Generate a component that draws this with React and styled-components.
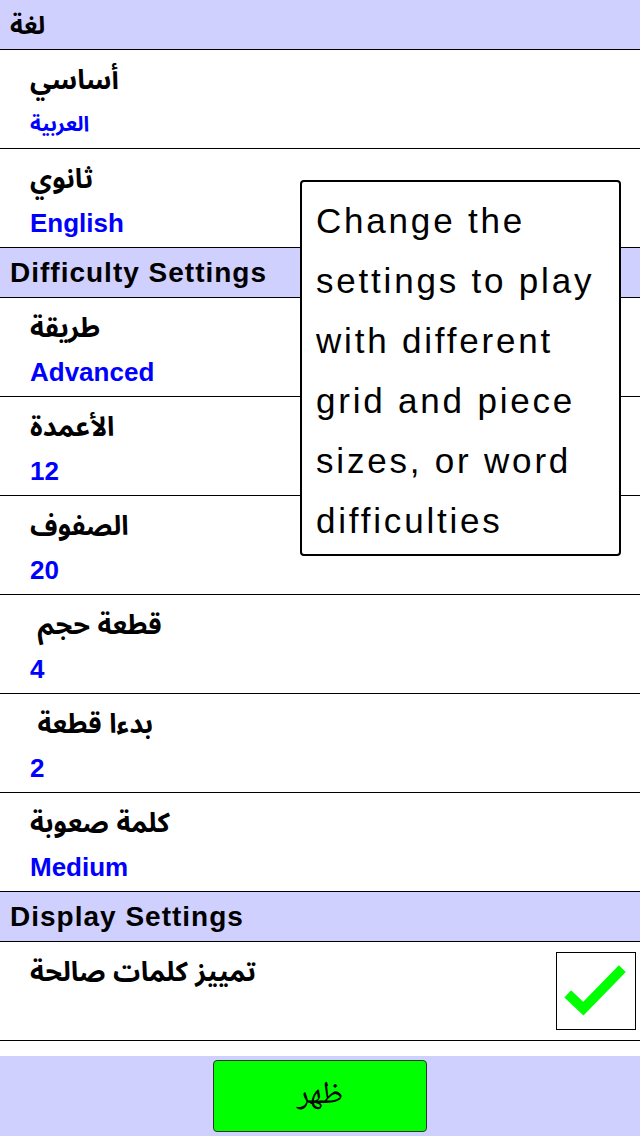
import React from "react";
import styled, { createGlobalStyle } from "styled-components";

const Global = createGlobalStyle`
  html, body { margin: 0; padding: 0; background: #fff; }
  body { font-family: "Liberation Sans", "Noto Sans Arabic", "Noto Naskh Arabic", "DejaVu Sans", sans-serif; }
  * { box-sizing: border-box; }
`;

const Screen = styled.div`
  position: relative;
  width: 640px;
  height: 1136px;
  display: flex;
  flex-direction: column;
  overflow: hidden;
  background: #fff;
`;

const List = styled.div`
  flex: 1;
  overflow: hidden;
  display: flex;
  flex-direction: column;
`;

const SectionHeader = styled.div`
  flex: none;
  height: 50px;
  padding: 5px 0 0 10px;
  background: #d0d0ff;
  border-bottom: 1px solid #000;
  font-size: ${(p) => (p.$arabic ? "25px" : "28px")};
  line-height: 40px;
  font-weight: bold;
  letter-spacing: ${(p) => (p.$arabic ? "0" : "1px")};
  color: #000;
`;

const Row = styled.div`
  flex: none;
  height: 99px;
  display: flex;
  align-items: flex-start;
  justify-content: space-between;
  padding: 6px 4px 0 30px;
  border-bottom: 1px solid #000;
`;

const RowText = styled.div`
  display: flex;
  flex-direction: column;
`;

const Title = styled.div`
  font-size: 27px;
  line-height: 48px;
  font-weight: bold;
  color: #000;
  white-space: pre;
`;

const Value = styled.div`
  font-size: ${(p) => (p.$arabic ? "21px" : "26px")};
  line-height: 40px;
  font-weight: bold;
  color: #0000ff;
`;

const Check = styled.div`
  width: 80px;
  height: 78px;
  margin-top: 4px;
  border: 1px solid #000;
  background: #fff;
  display: flex;
  align-items: center;
  justify-content: center;
`;

const BottomBar = styled.div`
  flex: none;
  height: 80px;
  background: #d0d0ff;
  display: flex;
  justify-content: center;
  align-items: flex-start;
  padding-top: 4px;
`;

const ShowButton = styled.button`
  width: 214px;
  height: 72px;
  background: #00ff00;
  border: 1px solid #333;
  border-radius: 4px;
  font-family: "Liberation Sans", "Noto Naskh Arabic", "Noto Sans Arabic", "DejaVu Sans", sans-serif;
  font-size: 32px;
  color: #000;
  padding: 0;
`;

const Tooltip = styled.div`
  position: absolute;
  left: 300px;
  top: 180px;
  width: 321px;
  height: 376px;
  background: #fff;
  border: 2px solid #000;
  border-radius: 4px;
  padding: 9px 4px 0 14px;
  font-size: 35px;
  line-height: 60px;
  letter-spacing: 2.8px;
  color: #000;
`;

const rows1 = [
  { title: "أساسي", value: "العربية", arabic: true },
  { title: "ثانوي", value: "English" },
];
const rows2 = [
  { title: "طريقة", value: "Advanced" },
  { title: "الأعمدة", value: "12" },
  { title: "الصفوف", value: "20" },
  { title: "\u00a0قطعة حجم", value: "4" },
  { title: "\u00a0بدءا قطعة", value: "2" },
  { title: "كلمة صعوبة", value: "Medium" },
];

function SettingRow({ title, value, arabic, checked }) {
  return (
    <Row>
      <RowText>
        <Title>{title}</Title>
        {value && <Value $arabic={arabic}>{value}</Value>}
      </RowText>
      {checked && (
        <Check>
          <svg width="80" height="78" viewBox="0 0 80 78">
            <polyline
              points="11,42 27,57 67,16"
              fill="none"
              stroke="#00ff00"
              strokeWidth="10"
            />
          </svg>
        </Check>
      )}
    </Row>
  );
}

export default function App() {
  return (
    <Screen>
      <Global />
      <List>
        <SectionHeader $arabic>لغة</SectionHeader>
        {rows1.map((r) => (
          <SettingRow key={r.title} {...r} />
        ))}
        <SectionHeader>Difficulty Settings</SectionHeader>
        {rows2.map((r) => (
          <SettingRow key={r.title} {...r} />
        ))}
        <SectionHeader>Display Settings</SectionHeader>
        <SettingRow title="تمييز كلمات صالحة" checked />
        <SettingRow title="إظهار الكلمات المفقودة" />
      </List>
      <BottomBar>
        <ShowButton>ظهر</ShowButton>
      </BottomBar>
      <Tooltip>
        Change the settings to play with different grid and piece sizes, or word difficulties
      </Tooltip>
    </Screen>
  );
}
